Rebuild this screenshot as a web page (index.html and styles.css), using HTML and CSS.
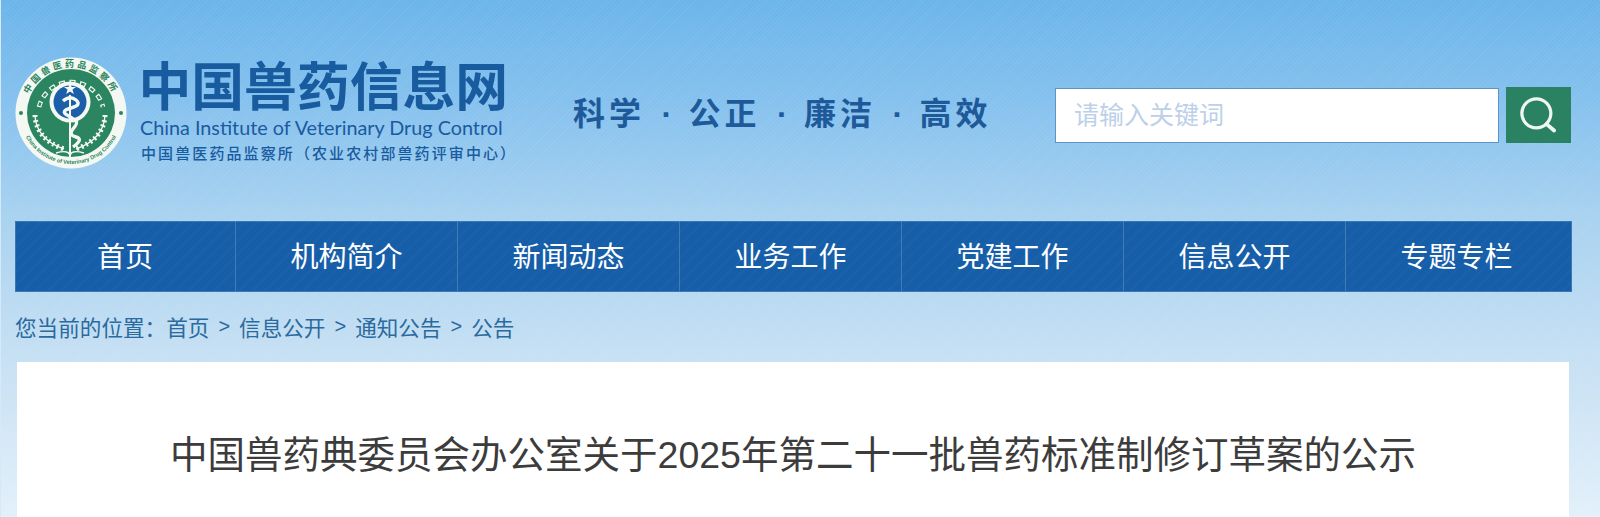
FILE: index.html
```html
<!DOCTYPE html>
<html lang="zh-CN">
<head>
    <meta charset="UTF-8">
    <meta name="viewport" content="width=device-width, initial-scale=1.0">
    <title>中国兽药信息网</title>
    <link rel="stylesheet" href="styles.css">
</head>
<body>
    <div class="page">
        <header class="header">
            <div class="brand">
                <svg class="emblem" viewBox="0 0 112 112" aria-hidden="true">
                    <defs>
                        <path id="arc-top" d="M10 56a46 46 0 0 1 92 0"/>
                        <path id="arc-bottom" d="M5 56a51 51 0 0 0 102 0"/>
                    </defs>
                    <circle cx="56" cy="56" r="55.5" fill="#f4f8f3"/>
                    <circle cx="56" cy="56" r="44" fill="#2b8560"/>
                    <text class="emblem-cn"><textPath href="#arc-top" startOffset="50%" text-anchor="middle">中国兽医药品监察所</textPath></text>
                    <text class="emblem-en"><textPath href="#arc-bottom" startOffset="50%" text-anchor="middle">China Institute of Veterinary Drug Control</textPath></text>
                    <circle cx="6" cy="56" r="2" fill="#2b8560"/>
                    <circle cx="106" cy="56" r="2" fill="#2b8560"/>
                    <path class="emblem-gear" d="M24 50a33 33 0 0 1 64 0"/>
                    <path class="emblem-gear-inner" d="M24 50a33 33 0 0 1 64 0"/>
                    <circle cx="55" cy="45" r="20.5" fill="#f4f8f3"/>
                    <circle cx="55" cy="45" r="16.5" fill="#1c5ea8"/>
                    <polygon fill="#f4f8f3" points="55,26 56.6,30 61,30 57.5,32.6 58.8,37 55,34.4 51.2,37 52.5,32.6 49,30 53.4,30"/>
                    <path class="emblem-staff" d="M55 38v64"/>
                    <path class="emblem-snake" d="M48 44q7-6 13-1t-5 8-4 7 9 6-3 8 3 8-3 10"/>
                    <path class="emblem-leaf" d="M20 58q1 24 29 34M90 58q-1 24-29 34"/>
                    <path class="emblem-leaf-dash" d="M20 58q1 24 29 34M90 58q-1 24-29 34"/>
                    <path class="emblem-leaf" d="M41 96q14-4 14 4q0-8 14-4"/>
                </svg>
                <div class="brand-text">
                    <div class="brand-title">中国兽药信息网</div>
                    <div class="brand-en">China Institute of Veterinary Drug Control</div>
                    <div class="brand-sub">中国兽医药品监察所（农业农村部兽药评审中心）</div>
                </div>
            </div>
            <div class="slogan">
                <span>科学</span><i>·</i><span>公正</span><i>·</i><span>廉洁</span><i>·</i><span>高效</span>
            </div>
            <form class="search">
                <input class="search-input" type="text" placeholder="请输入关键词">
                <button class="search-btn" type="button" aria-label="搜索">
                    <svg viewBox="0 0 40 40" width="43" height="43" aria-hidden="true">
                        <circle cx="18" cy="18" r="13.5" fill="none" stroke="#eef7f1" stroke-width="3"/>
                        <path d="M27.5 28l7 6" fill="none" stroke="#eef7f1" stroke-width="3.6" stroke-linecap="round"/>
                    </svg>
                </button>
            </form>
        </header>

        <nav class="nav">
            <a href="#">首页</a>
            <a href="#">机构简介</a>
            <a href="#">新闻动态</a>
            <a href="#">业务工作</a>
            <a href="#">党建工作</a>
            <a href="#">信息公开</a>
            <a href="#">专题专栏</a>
        </nav>

        <div class="crumbs">
            您当前的位置：
            <a href="#">首页</a><b>&gt;</b><a href="#">信息公开</a><b>&gt;</b><a href="#">通知公告</a><b>&gt;</b><a href="#">公告</a>
        </div>

        <main class="card">
            <h1>中国兽药典委员会办公室关于2025年第二十一批兽药标准制修订草案的公示</h1>
        </main>
    </div>
</body>
</html>
```

FILE: styles.css
```css
html, body {
    height: 100%;
}

body {
    margin: 0;
    overflow: hidden;
    border-left: 1px solid #d5e9f8;
    font-family: "Liberation Sans", "Noto Sans CJK SC", sans-serif;
    background-color: #a9d3f0;
    background-image:
        repeating-linear-gradient(135deg, rgba(255, 255, 255, 0.05) 0 1px, transparent 1px 3px),
        linear-gradient(180deg, #6bb5ea 0, #85c1ee 100px, #a8d2f0 215px, #c5dff3 350px, #e2f0fa 517px);
}

a {
    color: inherit;
    text-decoration: none;
}

.page {
    padding: 0 28px 0 14px;
}

.header {
    display: flex;
    height: 221px;
    box-sizing: border-box;
    padding-top: 57px;
}

.brand {
    display: flex;
    width: 558px;
}

.emblem {
    width: 112px;
    height: 112px;
}

.emblem-cn {
    font-size: 9px;
    font-weight: 700;
    letter-spacing: 2.8px;
    fill: #2b8560;
}

.emblem-en {
    font-size: 5.6px;
    font-weight: 700;
    fill: #2b8560;
}

.emblem-gear {
    fill: none;
    stroke: #f4f8f3;
    stroke-width: 4.6;
    stroke-dasharray: 6 4.5;
}

.emblem-gear-inner {
    fill: none;
    stroke: #2b8560;
    stroke-width: 2.4;
    stroke-dasharray: 3.6 6.9;
    stroke-dashoffset: -1.2;
}

.emblem-leaf {
    fill: none;
    stroke: #f4f8f3;
    stroke-width: 1.4;
}

.emblem-staff {
    stroke: #f4f8f3;
    stroke-width: 2;
}

.emblem-snake {
    fill: none;
    stroke: #f4f8f3;
    stroke-width: 3.4;
}

.emblem-leaf-dash {
    fill: none;
    stroke: #f4f8f3;
    stroke-width: 5;
    stroke-dasharray: 2 3;
}

.brand-text {
    margin-left: 13px;
    color: #195b9f;
}

.brand-title {
    font-size: 52.8px;
    line-height: 54px;
    font-weight: 700;
    white-space: nowrap;
    margin-top: 4px;
    margin-left: -1.5px;
}

.brand-en {
    font-family: "Lato", sans-serif;
    font-size: 19.8px;
    line-height: 20px;
    white-space: nowrap;
    margin-top: 2px;
}

.brand-sub {
    font-size: 15px;
    line-height: 22px;
    font-weight: 500;
    letter-spacing: 2.1px;
    white-space: nowrap;
    margin-left: 1px;
    margin-top: 6px;
}

.slogan {
    display: flex;
    align-items: center;
    align-self: flex-start;
    margin-top: 39px;
    width: 482px;
    color: #1e5a9a;
    font-size: 32px;
    line-height: 36px;
    font-weight: 700;
    letter-spacing: 4px;
}

.slogan i {
    width: 43.5px;
    text-align: center;
    font-style: normal;
    letter-spacing: 0;
}

.search {
    display: flex;
    align-self: flex-start;
    margin-top: 31px;
}

.search-input {
    width: 444px;
    height: 55px;
    box-sizing: border-box;
    padding: 0 18px;
    border: 1px solid #5c93c8;
    background: #fff;
    font-family: inherit;
    font-size: 25px;
    outline: none;
}

.search-input::placeholder {
    color: #bcd0e8;
    opacity: 1;
}

.search-btn {
    display: flex;
    align-items: center;
    justify-content: center;
    width: 65px;
    height: 56px;
    margin-left: 7px;
    margin-top: -1px;
    padding: 0;
    border: none;
    background-color: #2b8263;
}

.nav {
    display: flex;
    height: 71px;
    background-color: #175ea9;
    background-image: repeating-linear-gradient(135deg, rgba(255, 255, 255, 0.018) 0 2px, transparent 2px 9px);
    box-shadow: inset 0 0 0 1px #3a77b5;
}

.nav a {
    display: flex;
    align-items: center;
    justify-content: center;
    box-sizing: border-box;
    width: 222px;
    padding-bottom: 3px;
    color: #fff;
    font-size: 28px;
    border-left: 1px solid #3f7cba;
}

.nav a:first-child {
    width: 220px;
    border-left: none;
}

.crumbs {
    display: flex;
    align-items: center;
    height: 70px;
    box-sizing: border-box;
    padding-bottom: 2px;
    color: #2a6a9e;
    font-size: 21.6px;
    white-space: nowrap;
}

.crumbs b {
    margin: 0 9px;
    font-weight: 400;
    font-size: 20px;
}

.card {
    margin: 0 3px 0 2px;
    height: 155px;
    background: #fff;
    padding-top: 63px;
    box-sizing: border-box;
}

.card h1 {
    margin: 0;
    text-align: center;
    color: #3c3c3c;
    font-size: 37.5px;
    line-height: 60px;
    font-weight: 400;
    white-space: nowrap;
}
```
